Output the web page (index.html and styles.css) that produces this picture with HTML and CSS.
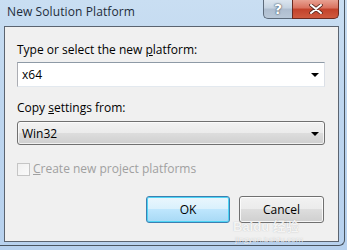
FILE: index.html
```html
<!DOCTYPE html>
<html>
<head>
<meta charset="utf-8">
<link rel="stylesheet" href="styles.css">
</head>
<body>
<div class="window">
  <div class="titlebar">
    <span class="title">New Solution Platform</span>
    <div class="caption">
      <div class="cap help">?</div>
      <div class="cap close">
        <svg width="14" height="10" viewBox="0 0 14 10"><path d="M2 1 L12 9 M12 1 L2 9" stroke="#5a2a20" stroke-width="3.6" stroke-linecap="round"/><path d="M2 1 L12 9 M12 1 L2 9" stroke="#ffffff" stroke-width="2" stroke-linecap="round"/></svg>
      </div>
    </div>
  </div>
  <div class="client">
    <div class="label first">Type or select the new <u>p</u>latform:</div>
    <div class="combo edit"><span>x64</span><span class="arrow"></span></div>
    <div class="label second">Copy <u>s</u>ettings from:</div>
    <div class="combo drop"><span>Win32</span><span class="arrow"></span></div>
    <div class="check"><span class="box"></span><span><u>C</u>reate new project platforms</span></div>
    <div class="buttons">
      <div class="btn ok">OK</div>
      <div class="btn cancel">Cancel</div>
    </div>
    <div class="watermark"><span class="wm-big">Baidu 经验</span><span class="wm-small">jingyan.baidu.com</span></div>
  </div>
</div>
</body>
</html>
```
FILE: styles.css
```css
* { box-sizing: border-box; }
html, body { margin: 0; padding: 0; }
body {
  width: 347px; height: 250px; overflow: hidden;
  background: linear-gradient(180deg, #c9def2 0%, #bed6ef 40%, #b7d1ee 100%);
  font-family: "Open Sans", "Liberation Sans", sans-serif;
  font-size: 12px;
  color: #000;
}
.window {
  width: 345px; height: 246px;
  border-right: 1px solid #4a5560;
  border-bottom: 1px solid #4a5560;
  border-bottom-right-radius: 6px;
  display: flex; flex-direction: column;
  padding: 0 5px 0 4px;
}
.titlebar {
  height: 26px; display: flex; align-items: flex-start; justify-content: space-between;
}
.title { padding-left: 3px; margin-top: 4px; line-height: 16px; color: #1e2c3a; letter-spacing: 0.1px; }
.caption { display: flex; height: 19px; margin-right: 0px; }
.cap {
  height: 19px; display: flex; align-items: center; justify-content: center;
  border: 1px solid #5d6b7b; border-top: none;
}
.help {
  width: 29px; border-bottom-left-radius: 5px; border-right: none;
  background: linear-gradient(180deg, #dbe5ef 0%, #c5d3e1 45%, #aebdcf 50%, #b9c8d8 100%);
  color: #fff; font-weight: bold; font-size: 14px; font-family: "DejaVu Sans", sans-serif;
  text-shadow: 0 0 2px #3a4a5a, 0 0 1px #3a4a5a;
}
.close {
  width: 47px; border-bottom-right-radius: 5px; border-color: #6b2a20;
  background: linear-gradient(180deg, #e8a192 0%, #d9705d 45%, #c2412a 50%, #cf5a3f 100%);
}
.client {
  position: relative;
  width: 335px; height: 216px;
  border: 1px solid #5b6470;
  background: #f0f0f0;
  padding: 0 0 0 12px;
  display: flex; flex-direction: column;
}
.label { line-height: 16px; height: 16px; }
.first { margin-top: 15px; }
.combo {
  width: 308px; display: flex; align-items: center; justify-content: space-between;
  padding: 0 5px 0 4px;
}
.edit {
  margin-top: 4px; height: 25px; background: #fff;
  border: 1px solid #abadb3; border-top-color: #8e9aa6; border-right-color: #dbdfe6; border-bottom-color: #e3e9ef;
}
.second { margin-top: 13px; }
.drop {
  margin-top: 5px; height: 24px; border: 1px solid #707070; border-radius: 3px;
  background: linear-gradient(180deg, #f2f2f2 0%, #ebebeb 49%, #dddddd 50%, #cfcfcf 100%);
  box-shadow: inset 0 0 0 1px rgba(255,255,255,0.7);
}
.arrow {
  width: 0; height: 0; border-left: 4px solid transparent; border-right: 4px solid transparent;
  border-top: 4px solid #000; margin-top: 1px;
}
.check { margin-top: 17px; display: flex; align-items: center; gap: 3px; color: #a0a0a0; line-height: 14px; }
.box {
  width: 13px; height: 13px; border: 1px solid #c5c5c5;
  background: linear-gradient(135deg, #f0f0f0, #fafafa);
}
.buttons { margin-top: 20px; display: flex; gap: 9px; padding-left: 129px; }
.btn {
  height: 27px; display: flex; align-items: center; justify-content: center;
  border-radius: 3px; line-height: 14px;
}
.ok {
  width: 84px; border: 1px solid #3c7fb1;
  background: linear-gradient(180deg, #eaf6fd 0%, #d9f0fc 49%, #bee6fd 50%, #a7d9f5 100%);
  box-shadow: inset 0 0 0 1px #4ed5f5;
}
.cancel {
  width: 85px; border: 1px solid #707070;
  background: linear-gradient(180deg, #f2f2f2 0%, #ebebeb 49%, #dddddd 50%, #cfcfcf 100%);
  box-shadow: inset 0 0 0 1px rgba(255,255,255,0.8);
}
.watermark {
  position: absolute; left: 228px; top: 192px;
  display: flex; flex-direction: column; align-items: flex-start;
  color: rgba(255,255,255,0.85); pointer-events: none;
}
.wm-big { font-family: "Liberation Sans", "Noto Sans CJK SC", sans-serif; font-weight: bold; font-size: 13px; line-height: 15px; height: 15px; text-shadow: 0 0 1px rgba(140,140,140,0.6); }
.wm-small { font-size: 8px; line-height: 9px; height: 9px; margin-left: 2px; text-shadow: 0 0 1px rgba(140,140,140,0.6); }
```
